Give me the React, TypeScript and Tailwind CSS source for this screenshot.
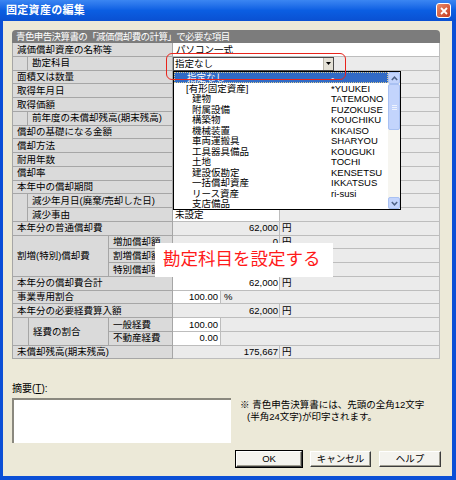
import React from 'react'

const FONT = "font-['Liberation_Sans','Noto_Sans_CJK_JP',sans-serif]"

const ROW = 'h-[13.75px]'
const LABEL =
  'flex items-center pl-[4px] bg-[#dadada] border-r border-b border-[#a6a6a6] whitespace-nowrap overflow-hidden shrink-0'
const STUB = 'bg-[#dadada] border-r border-b border-[#a6a6a6] shrink-0'
const GRAY = 'flex items-center bg-[#ebebeb] border-r border-b border-[#bdbdbd] whitespace-nowrap overflow-hidden'
const WHITE = 'flex items-center bg-white border-r border-b border-[#bdbdbd] whitespace-nowrap overflow-hidden'

type Val = { text?: string; unit?: string; white?: boolean; short?: boolean }

function Values({ text, unit, white, short }: Val) {
  if (short) {
    return (
      <>
        <div className={`${WHITE} w-[48px] shrink-0 justify-end pr-[2px]`}>{text}</div>
        <div className={`${GRAY} flex-1 pl-[3px]`}>{unit}</div>
      </>
    )
  }
  return (
    <>
      <div className={`${white ? WHITE : GRAY} w-[107px] shrink-0 justify-end pr-[1px]`}>{text}</div>
      <div className={`${GRAY} flex-1 pl-[2px]`}>{unit}</div>
    </>
  )
}

function Row({ label, lw = 'w-[160px]', children }: { label: React.ReactNode; lw?: string; children?: React.ReactNode }) {
  return (
    <div className={`flex ${ROW}`}>
      <div className={`${LABEL} ${lw}`}>{label}</div>
      {children ?? <Values />}
    </div>
  )
}

// child rows hang off a parent label, sharing one blank stub on the left
function Indent({ children }: { children: React.ReactNode }) {
  return (
    <div className="flex">
      <div className={`${STUB} w-[15px]`} />
      <div className="flex-1 flex flex-col">{children}</div>
    </div>
  )
}

function Combo() {
  return (
    <div className="w-[161px] shrink-0 bg-white border border-[#4a4a4a] flex items-center">
      <span className="flex-1 pl-[1px]">指定なし</span>
      <div className="w-[10px] h-full bg-[#e4e1d6] border-l border-[#b9b6aa] flex items-center justify-center">
        <svg width="5" height="3" viewBox="0 0 5 3">
          <path d="M0 0 H5 L2.5 3 Z" fill="#000" />
        </svg>
      </div>
    </div>
  )
}

function Panel() {
  return (
    <div className="w-[428px] flex flex-col text-[9.5px] leading-none">
      <div className="h-[13px] rounded-t-[4px] bg-[#7c7c7c] text-white flex items-center pl-[4px] tracking-[-0.6px]">
        青色申告決算書の「減価償却費の計算」で必要な項目
      </div>
      <div className="flex flex-col border-l border-[#a6a6a6]">
        <Row label="減価償却資産の名称等">
          <div className={`${WHITE} flex-1 pl-[3px]`}>パソコン一式</div>
        </Row>
        <Indent>
          <Row label="勘定科目" lw="w-[145px]">
            <Combo />
            <div className={`${GRAY} flex-1`} />
          </Row>
        </Indent>
        <Row label="面積又は数量" />
        <Row label="取得年月日" />
        <Row label="取得価額" />
        <Indent>
          <Row label="前年度の未償却残高(期末残高)" lw="w-[145px]" />
        </Indent>
        <Row label="償却の基礎になる金額" />
        <Row label="償却方法" />
        <Row label="耐用年数" />
        <Row label="償却率" />
        <Row label="本年中の償却期間" />
        <Indent>
          <Row label="減少年月日(廃棄/売却した日)" lw="w-[145px]" />
          <Row label="減少事由" lw="w-[145px]">
            <div className={`${WHITE} w-[107px] shrink-0 pl-[2px]`}>未設定</div>
            <div className={`${GRAY} flex-1`} />
          </Row>
        </Indent>
        <Row label="本年分の普通償却費">
          <Values text="62,000" unit="円" />
        </Row>
        <div className="flex">
          <div className={`${LABEL} w-[96px]`}>割増(特別)償却費</div>
          <div className="flex-1 flex flex-col">
            <Row label="増加償却額" lw="w-[64px]">
              <Values text="0" unit="円" />
            </Row>
            <Row label="割増償却額" lw="w-[64px]" />
            <Row label="特別償却額" lw="w-[64px]" />
          </div>
        </div>
        <Row label="本年分の償却費合計">
          <Values text="62,000" unit="円" white />
        </Row>
        <Row label="事業専用割合">
          <Values text="100.00" unit="%" short />
        </Row>
        <Row label="本年分の必要経費算入額">
          <Values text="62,000" unit="円" />
        </Row>
        <div className="flex">
          <div className={`${STUB} w-[16px]`} />
          <div className={`${LABEL} w-[80px]`}>経費の割合</div>
          <div className="flex-1 flex flex-col">
            <Row label="一般経費" lw="w-[64px]">
              <Values text="100.00" short />
            </Row>
            <Row label="不動産経費" lw="w-[64px]">
              <Values text="0.00" short />
            </Row>
          </div>
        </div>
        <Row label="未償却残高(期末残高)">
          <Values text="175,667" unit="円" />
        </Row>
      </div>
    </div>
  )
}

const ITEMS: [string, string, string][] = [
  ['[有形固定資産]', '*YUUKEI', 'pl-[12px]'],
  ['建物', 'TATEMONO', 'pl-[18px]'],
  ['附属設備', 'FUZOKUSE', 'pl-[18px]'],
  ['構築物', 'KOUCHIKU', 'pl-[18px]'],
  ['機械装置', 'KIKAISO', 'pl-[18px]'],
  ['車両運搬具', 'SHARYOU', 'pl-[18px]'],
  ['工具器具備品', 'KOUGUKI', 'pl-[18px]'],
  ['土地', 'TOCHI', 'pl-[18px]'],
  ['建設仮勘定', 'KENSETSU', 'pl-[18px]'],
  ['一括償却資産', 'IKKATSUS', 'pl-[18px]'],
  ['リース資産', 'ri-susi', 'pl-[18px]'],
  ['支店備品', '', 'pl-[18px]'],
]

function Chevron({ up }: { up?: boolean }) {
  return (
    <svg width="7" height="5" viewBox="0 0 7 5">
      <path d={up ? 'M0.8 4 L3.5 1.2 L6.2 4' : 'M0.8 1 L3.5 3.8 L6.2 1'} stroke="#4d6185" strokeWidth="1.5" fill="none" />
    </svg>
  )
}

function ScrollBar() {
  const btn = 'rounded-[2px] bg-[#c3d4fc] border border-[#a9c1f2] flex items-center justify-center shrink-0'
  return (
    <div className="w-[12px] flex flex-col bg-[#f6f5f0]">
      <div className={`${btn} h-[12px]`}>
        <Chevron up />
      </div>
      <div className={`${btn} h-[46px] flex-col gap-[1px]`}>
        <div className="w-[5px] h-px bg-[#eef3fe]" />
        <div className="w-[5px] h-px bg-[#eef3fe]" />
        <div className="w-[5px] h-px bg-[#eef3fe]" />
      </div>
      <div className="flex-1" />
      <div className={`${btn} h-[12px]`}>
        <Chevron />
      </div>
    </div>
  )
}

function Dropdown() {
  return (
    <div className="absolute left-[173px] top-[71px] w-[228px] h-[139px] bg-white border border-black flex text-[9.5px] leading-none">
      <div className="flex-1 flex flex-col">
        <div className="h-[11px] flex items-center bg-[#316ac5] text-white border border-dotted border-[#d8c890]">
          <span className="w-[156px] pl-[12px]">指定なし</span>
          <span>-</span>
        </div>
        {ITEMS.map(([name, code, pad]) => (
          <div key={name} className="h-[10.5px] flex items-center">
            <span className={`w-[157px] ${pad}`}>{name}</span>
            <span>{code}</span>
          </div>
        ))}
      </div>
      <ScrollBar />
    </div>
  )
}

function Btn({ children, w, def = false }: { children: React.ReactNode; w: string; def?: boolean }) {
  return (
    <div
      className={`${w} h-[16px] flex items-center justify-center text-[9.5px] bg-[#f4f3ee] border border-t-white border-l-white border-b-[#3c3c3c] border-r-[#3c3c3c] shadow-[inset_-1px_-1px_0_#a09e92] ${
        def ? 'outline outline-1 outline-black' : ''
      }`}
    >
      {children}
    </div>
  )
}

export default function App() {
  return (
    <div className={`relative w-[456px] h-[480px] flex flex-col bg-[#0b4fd6] text-black ${FONT}`}>
      {/* Title bar */}
      <div className="h-[21px] shrink-0 flex items-center justify-between pl-[6px] pr-[5px] bg-gradient-to-b from-[#3b86f2] via-[#0b5ee2] to-[#0a50d2]">
        <span className="text-white text-[11px] font-bold leading-none tracking-[0.3px]">固定資産の編集</span>
        <div className="w-[15px] h-[15px] rounded-[3px] border border-white bg-gradient-to-br from-[#e98a6a] to-[#c6381c] flex items-center justify-center">
          <svg width="8" height="8" viewBox="0 0 8 8">
            <path d="M1 1 L7 7 M7 1 L1 7" stroke="#fff" strokeWidth="1.8" />
          </svg>
        </div>
      </div>

      {/* Client area */}
      <div className="flex-1 ml-[3px] mr-[4px] mb-[4px] bg-[#ece9d8] flex flex-col pl-[9px] pt-[9px]">
        <Panel />
        <div className="mt-[25px] text-[10px] leading-none">
          摘要(<span className="underline">T</span>):
        </div>
        <div className="mt-[4px] flex">
          <div className="w-[219px] h-[45px] bg-white border-t-2 border-l-2 border-[#8a887e]" />
          <div className="ml-[9px] pt-[1px] text-[9.5px] leading-[12px]">
            <div>※ 青色申告決算書には、先頭の全角12文字</div>
            <div className="pl-[7px]">(半角24文字)が印字されます。</div>
          </div>
        </div>
        <div className="mt-[8px] flex pl-[224px] gap-[8px]">
          <Btn w="w-[66px]" def>
            OK
          </Btn>
          <Btn w="w-[61px]">キャンセル</Btn>
          <Btn w="w-[62px]">ヘルプ</Btn>
        </div>
      </div>

      <Dropdown />

      {/* annotation */}
      <div className="absolute left-[166px] top-[53px] w-[180px] h-[27px] border border-[#e8241c] rounded-[6px]" />
      <div className="absolute left-[155px] top-[243px] w-[178px] h-[34px] bg-white flex items-center pl-[8px] text-[#ff1a1a] text-[17.5px] leading-none">
        勘定科目を設定する
      </div>
    </div>
  )
}
